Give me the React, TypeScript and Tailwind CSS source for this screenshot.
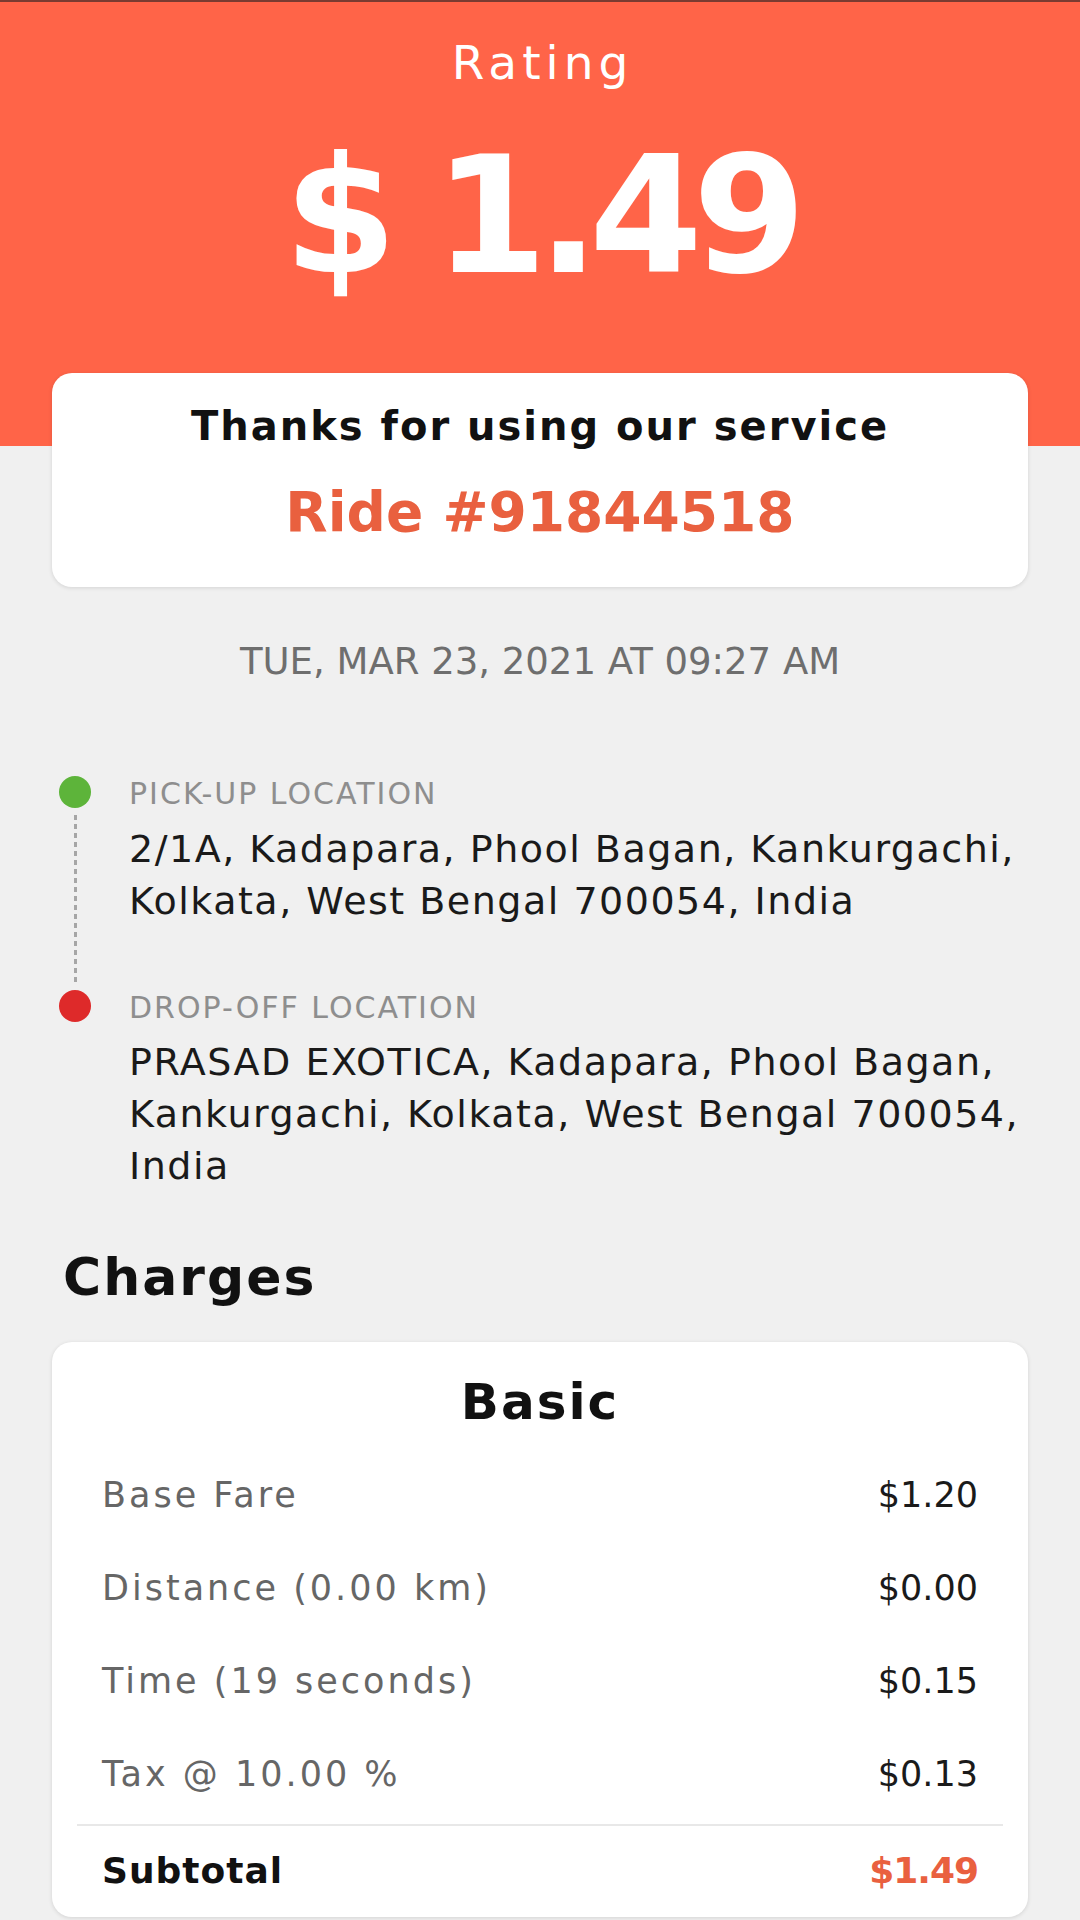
import React from "react";

const rows = [
  { label: "Base Fare", value: "$1.20" },
  { label: "Distance (0.00 km)", value: "$0.00" },
  { label: "Time (19 seconds)", value: "$0.15" },
  { label: "Tax @ 10.00 %", value: "$0.13" },
];

export default function App() {
  return (
    <div className="w-[1080px] h-[1920px] overflow-hidden bg-[#f0f0f0] font-['DejaVu_Sans',sans-serif]">
      {/* Header */}
      <div className="h-[446px] bg-[#FF6448] border-t-2 border-[#7a3b31] flex flex-col items-center">
        <div className="mt-[37px] pl-[5px] text-[47px] leading-none tracking-[5px] text-white">Rating</div>
        <div className="mt-[48px] text-[163px] leading-none font-bold tracking-[-10px] text-white">$ 1.49</div>
      </div>

      {/* Thanks card */}
      <div className="-mt-[73px] mx-[52px] h-[214px] bg-white rounded-[20px] shadow-[0_1px_4px_rgba(0,0,0,0.12)] flex flex-col items-center pt-[33px]">
        <div className="text-[40px] font-bold leading-none tracking-[2px] text-[#111]">Thanks for using our service</div>
        <div className="mt-[39px] text-[55px] font-bold leading-none text-[#E9603F]">Ride #91844518</div>
      </div>

      {/* Date */}
      <div className="mt-[56px] text-center text-[37px] leading-none text-[#6e6e6e]">TUE, MAR 23, 2021 AT 09:27 AM</div>

      {/* Locations */}
      <div className="mt-[96px] pl-[59px]">
        <div className="flex">
          <div className="w-[32px] flex flex-col items-center">
            <div className="w-[32px] h-[32px] rounded-full bg-[#5DB43A] shrink-0" />
            <div className="mt-[7px] mb-[11px] flex-1 w-[3px] bg-[repeating-linear-gradient(to_bottom,#a6a6a6_0px,#a6a6a6_5px,transparent_5px,transparent_9px)]" />
          </div>
          <div className="ml-[38px] pb-[66px]">
            <div className="mt-[3px] text-[30px] leading-none tracking-[2px] text-[#8e8e8e]">PICK-UP LOCATION</div>
            <div className="mt-[14px] text-[38px] leading-[52px] tracking-[1.5px] text-[#1a1a1a] whitespace-nowrap">
              2/1A, Kadapara, Phool Bagan, Kankurgachi,
              <br />
              Kolkata, West Bengal 700054, India
            </div>
          </div>
        </div>
        <div className="flex">
          <div className="w-[32px] flex flex-col items-center">
            <div className="-mt-[3px] w-[32px] h-[32px] rounded-full bg-[#DE2A2A] shrink-0" />
          </div>
          <div className="ml-[38px]">
            <div className="text-[30px] leading-none tracking-[2px] text-[#8e8e8e]">DROP-OFF LOCATION</div>
            <div className="mt-[13px] text-[38px] leading-[52px] tracking-[1.5px] text-[#1a1a1a] whitespace-nowrap">
              PRASAD EXOTICA, Kadapara, Phool Bagan,
              <br />
              Kankurgachi, Kolkata, West Bengal 700054,
              <br />
              India
            </div>
          </div>
        </div>
      </div>

      {/* Charges */}
      <div className="mt-[59px] ml-[63px] text-[52px] font-bold leading-none tracking-[2px] text-[#111]">Charges</div>

      <div className="mt-[39px] mx-[52px] bg-white rounded-[20px] shadow-[0_1px_4px_rgba(0,0,0,0.12)] pt-[35px] pb-[2px]">
        <div className="text-center text-[50px] font-bold leading-none tracking-[2px] text-[#111]">Basic</div>
        <div className="mt-[22px] px-[50px]">
          {rows.map((r) => (
            <div key={r.label} className="h-[93px] flex items-center justify-between">
              <span className="text-[35px] leading-none tracking-[3px] text-[#666]">{r.label}</span>
              <span className="text-[35px] leading-none text-[#1a1a1a]">{r.value}</span>
            </div>
          ))}
        </div>
        <div className="mt-[3px] mx-[25px] h-[2px] bg-[#e8e8e8]" />
        <div className="h-[89px] px-[50px] flex items-center justify-between">
          <span className="text-[36px] font-bold leading-none tracking-[1px] text-[#111]">Subtotal</span>
          <span className="text-[36px] font-bold leading-none tracking-[-1px] text-[#E9603F]">$1.49</span>
        </div>
      </div>
    </div>
  );
}
